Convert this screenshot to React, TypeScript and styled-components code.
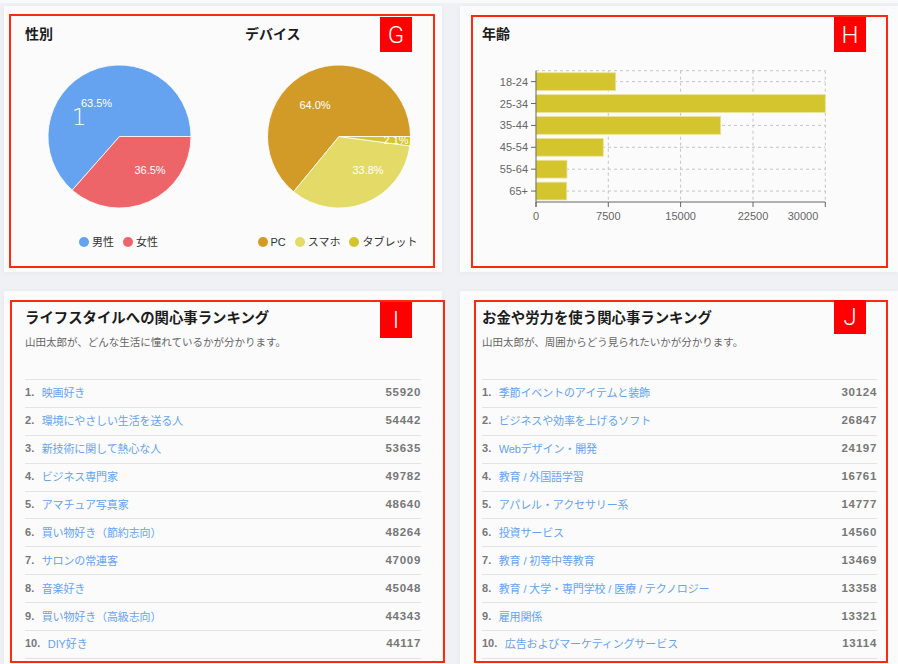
import React from "react";
import styled, { createGlobalStyle } from "styled-components";

const GlobalStyle = createGlobalStyle`
  html, body {
    margin: 0;
    padding: 0;
    height: 664px;
    overflow: hidden;
    background: #eff1f5;
    font-family: "Liberation Sans", "Noto Sans CJK JP", sans-serif;
  }
`;

const Page = styled.div`
  position: relative;
  width: 898px;
  height: 664px;
  overflow: hidden;
  box-sizing: border-box;
  box-shadow: inset 0 3px 0 #f9f9fb;
  padding: 6px 0 0 4px;
  display: grid;
  grid-template-columns: 438px 438px;
  grid-template-rows: 266px 373px;
  column-gap: 18px;
  row-gap: 19px;
`;

const Card = styled.section`
  background: #fbfbfb;
  box-shadow: 0 1px 6px rgba(60, 70, 100, 0.05);
`;

const SplitCard = styled(Card)`
  display: flex;
`;

const Panel = styled.div<{ $width: number; $pad: number }>`
  width: ${(p) => p.$width}px;
  padding-top: 18px;
  display: flex;
  flex-direction: column;
  > h3 {
    padding-left: ${(p) => p.$pad}px;
  }
`;

const ChartTitle = styled.h3`
  margin: 0;
  font-size: 14px;
  line-height: 20px;
  font-weight: 700;
  color: #1c1c1c;
`;

const ChartSvg = styled.svg`
  display: block;
  margin-top: 6px;
  font-family: "Liberation Sans", "Noto Sans CJK JP", sans-serif;
`;

const Legend = styled.div`
  display: flex;
  justify-content: center;
  gap: 9px;
  margin-top: 11px;
  padding-left: 11px;
  height: 14px;
`;

const LegendItem = styled.span`
  display: flex;
  align-items: center;
  gap: 3px;
  font-size: 11px;
  line-height: 14px;
  color: #333;
`;

const Dot = styled.i<{ $color: string }>`
  width: 10px;
  height: 10px;
  border-radius: 50%;
  background: ${(p) => p.$color};
`;

const RankCard = styled(Card)<{ $pad: number }>`
  padding: 17px 21px 0 ${(p) => p.$pad}px;
`;

const RankTitle = styled.h2`
  margin: 0;
  font-size: 14.4px;
  line-height: 20px;
  font-weight: 700;
  color: #1c1c1c;
`;

const RankSub = styled.p`
  margin: 6px 0 29px;
  font-size: 10.5px;
  line-height: 16px;
  color: #666;
`;

const RankList = styled.ol`
  list-style: none;
  margin: 0;
  padding: 0;
  border-bottom: 1px solid #e3e3e3;
`;

const RankRow = styled.li`
  box-sizing: border-box;
  height: 27.9px;
  padding-bottom: 2px;
  border-top: 1px solid #e3e3e3;
  display: flex;
  align-items: center;
  font-size: 11px;
`;

const RankNo = styled.span`
  font-weight: 700;
  color: #777;
  margin-right: 7.5px;
`;

const RankName = styled.a`
  color: #65a3f0;
  flex: 1;
  letter-spacing: -0.12px;
`;

const RankCount = styled.span`
  font-size: 11.5px;
  font-weight: 700;
  color: #777;
  letter-spacing: 0.7px;
`;

// annotation overlays that sit on top of the screenshot
const Outline = styled.div<{ $x: number; $y: number; $w: number; $h: number }>`
  position: absolute;
  box-sizing: border-box;
  left: ${(p) => p.$x}px;
  top: ${(p) => p.$y}px;
  width: ${(p) => p.$w}px;
  height: ${(p) => p.$h}px;
  border: 2.5px solid #ff2a0c;
`;

const Tag = styled.div<{ $x: number; $y: number; $h: number }>`
  position: absolute;
  left: ${(p) => p.$x}px;
  top: ${(p) => p.$y}px;
  width: 32px;
  height: ${(p) => p.$h}px;
  background: #ff0000;
  color: #fff;
  font-family: "Roboto", "Liberation Sans", sans-serif;
  font-weight: 300;
  font-size: 24px;
  display: flex;
  align-items: center;
  justify-content: center;
`;

type Slice = { value: number; color: string };

const slicePath = (cx: number, cy: number, r: number, from: number, to: number) => {
  // angles in percent, running counter-clockwise from 3 o'clock
  const a0 = (from / 100) * Math.PI * 2;
  const a1 = (to / 100) * Math.PI * 2;
  const x0 = cx + r * Math.cos(a0);
  const y0 = cy - r * Math.sin(a0);
  const x1 = cx + r * Math.cos(a1);
  const y1 = cy - r * Math.sin(a1);
  const large = to - from > 50 ? 1 : 0;
  return `M${cx} ${cy}L${x0} ${y0}A${r} ${r} 0 ${large} 0 ${x1} ${y1}Z`;
};

const Pie: React.FC<{
  cx: number;
  slices: Slice[];
  labels: { x: number; y: number; text: string }[];
  children?: React.ReactNode;
}> = ({ cx, slices, labels, children }) => {
  let acc = 0;
  return (
    <ChartSvg width="218" height="174" viewBox="0 0 218 174">
      {slices.map((s) => {
        const d = slicePath(cx, 86.5, 71.5, acc, acc + s.value);
        acc += s.value;
        return <path key={s.color} d={d} fill={s.color} stroke="#fff" strokeWidth="0.8" />;
      })}
      {labels.map((l) => (
        <text key={l.text} x={l.x} y={l.y} fontSize="11" fill="#fff" textAnchor="middle">
          {l.text}
        </text>
      ))}
      {children}
    </ChartSvg>
  );
};

const ageData = [
  { label: "18-24", value: 8265 },
  { label: "25-34", value: 30000 },
  { label: "35-44", value: 19150 },
  { label: "45-54", value: 6980 },
  { label: "55-64", value: 3215 },
  { label: "65+", value: 3185 },
];

const ticks = [
  { x: 76, label: "0", at: 76 },
  { x: 148.3, label: "7500", at: 148.3 },
  { x: 220.6, label: "15000", at: 220.6 },
  { x: 293, label: "22500", at: 293 },
  { x: 365.3, label: "30000", at: 343 },
];

const AgeChart: React.FC = () => {
  const top = 20.7;
  const bottom = 152;
  const band = (bottom - top) / 6;
  return (
    <ChartSvg width="438" height="176" viewBox="0 0 438 176">
      <g stroke="#c4c4c4" strokeWidth="1" strokeDasharray="3 3">
        <line x1="76" x2="365.3" y1={top} y2={top} />
        {ticks.slice(1).map((t) => (
          <line key={t.label} x1={t.x} x2={t.x} y1={top} y2={bottom} />
        ))}
        {ageData.map((_, i) => (
          <line key={i} x1="76" x2="365.3" y1={top + band * (i + 0.5)} y2={top + band * (i + 0.5)} />
        ))}
      </g>
      {ageData.map((d, i) => (
        <rect
          key={d.label}
          x="76"
          y={top + band * (i + 0.5) - 8.9}
          width={(d.value * 289.3) / 30000}
          height="17.8"
          fill="#d4c52e"
          stroke="#ebe39a"
          strokeWidth="0.8"
        />
      ))}
      <g stroke="#666" strokeWidth="1">
        <line x1="76" x2="76" y1={top} y2={bottom + 5} />
        <line x1="76" x2="365.3" y1={bottom} y2={bottom} />
        {ticks.map((t) => (
          <line key={t.label} x1={t.x} x2={t.x} y1={bottom} y2={bottom + 5} />
        ))}
        {ageData.map((d, i) => (
          <line key={d.label} x1="71" x2="76" y1={top + band * (i + 0.5)} y2={top + band * (i + 0.5)} />
        ))}
      </g>
      <g fontSize="11" fill="#666">
        {ageData.map((d, i) => (
          <text key={d.label} x="68" y={top + band * (i + 0.5) + 4} textAnchor="end">
            {d.label}
          </text>
        ))}
        {ticks.map((t) => (
          <text key={t.label} x={t.at} y={bottom + 18} textAnchor="middle">
            {t.label}
          </text>
        ))}
      </g>
    </ChartSvg>
  );
};

const lifestyle = [
  ["映画好き", 55920],
  ["環境にやさしい生活を送る人", 54442],
  ["新技術に関して熱心な人", 53635],
  ["ビジネス専門家", 49782],
  ["アマチュア写真家", 48640],
  ["買い物好き（節約志向）", 48264],
  ["サロンの常連客", 47009],
  ["音楽好き", 45048],
  ["買い物好き（高級志向）", 44343],
  ["DIY好き", 44117],
] as const;

const spending = [
  ["季節イベントのアイテムと装飾", 30124],
  ["ビジネスや効率を上げるソフト", 26847],
  ["Webデザイン・開発", 24197],
  ["教育 / 外国語学習", 16761],
  ["アパレル・アクセサリー系", 14777],
  ["投資サービス", 14560],
  ["教育 / 初等中等教育", 13469],
  ["教育 / 大学・専門学校 / 医療 / テクノロジー", 13358],
  ["雇用関係", 13321],
  ["広告およびマーケティングサービス", 13114],
] as const;

const Ranking: React.FC<{
  title: string;
  sub: string;
  pad: number;
  rows: readonly (readonly [string, number])[];
}> = ({ title, sub, pad, rows }) => (
  <RankCard $pad={pad}>
    <RankTitle>{title}</RankTitle>
    <RankSub>{sub}</RankSub>
    <RankList>
      {rows.map(([name, count], i) => (
        <RankRow key={name}>
          <RankNo>{i + 1}.</RankNo>
          <RankName>{name}</RankName>
          <RankCount>{count}</RankCount>
        </RankRow>
      ))}
    </RankList>
  </RankCard>
);

const App: React.FC = () => (
  <Page>
    <GlobalStyle />
    <SplitCard>
      <Panel $width={218} $pad={21}>
        <ChartTitle>性別</ChartTitle>
        <Pie
          cx={115.5}
          slices={[
            { value: 63.5, color: "#65a3f0" },
            { value: 36.5, color: "#ee6569" },
          ]}
          labels={[
            { x: 92.5, y: 57, text: "63.5%" },
            { x: 146, y: 124, text: "36.5%" },
          ]}
        >
          <text x="75" y="75" fontSize="23" fill="#fff" textAnchor="middle" fontFamily="DejaVu Sans" fontWeight="200">
            1
          </text>
        </Pie>
        <Legend>
          <LegendItem>
            <Dot $color="#65a3f0" />
            男性
          </LegendItem>
          <LegendItem>
            <Dot $color="#ee6569" />
            女性
          </LegendItem>
        </Legend>
      </Panel>
      <Panel $width={220} $pad={23}>
        <ChartTitle>デバイス</ChartTitle>
        <Pie
          cx={117}
          slices={[
            { value: 64.05, color: "#d29b27" },
            { value: 33.85, color: "#e4da68" },
            { value: 2.1, color: "#d4c52e" },
          ]}
          labels={[
            { x: 93, y: 58.5, text: "64.0%" },
            { x: 146, y: 124, text: "33.8%" },
            { x: 174, y: 93.5, text: "2.1%" },
          ]}
        />
        <Legend>
          <LegendItem>
            <Dot $color="#d29b27" />
            PC
          </LegendItem>
          <LegendItem>
            <Dot $color="#e4da68" />
            スマホ
          </LegendItem>
          <LegendItem>
            <Dot $color="#d4c52e" />
            タブレット
          </LegendItem>
        </Legend>
      </Panel>
    </SplitCard>
    <Card>
      <Panel $width={438} $pad={22}>
        <ChartTitle>年齢</ChartTitle>
        <AgeChart />
      </Panel>
    </Card>
    <Ranking
      title="ライフスタイルへの関心事ランキング"
      sub="山田太郎が、どんな生活に憧れているかが分かります。"
      pad={21}
      rows={lifestyle}
    />
    <Ranking
      title="お金や労力を使う関心事ランキング"
      sub="山田太郎が、周囲からどう見られたいかが分かります。"
      pad={22}
      rows={spending}
    />

    <Outline $x={9} $y={14} $w={426} $h={254} />
    <Tag $x={380} $y={17} $h={35}>G</Tag>
    <Outline $x={471} $y={15} $w={417} $h={253} />
    <Tag $x={834} $y={17} $h={35}>H</Tag>
    <Outline $x={10} $y={300} $w={435} $h={363} />
    <Tag $x={380} $y={302} $h={36}>I</Tag>
    <Outline $x={474} $y={300} $w={414} $h={363} />
    <Tag $x={834} $y={300} $h={34}>J</Tag>
  </Page>
);

export default App;
